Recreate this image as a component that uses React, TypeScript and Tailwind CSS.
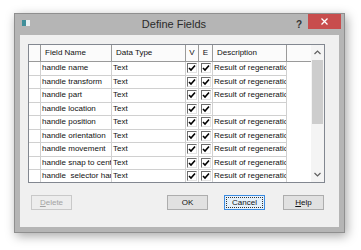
import React from "react";

const rows = [
  { name: "handle name", desc: "Result of regeneration" },
  { name: "handle transform", desc: "Result of regeneration" },
  { name: "handle part", desc: "Result of regeneration" },
  { name: "handle location", desc: "" },
  { name: "handle position", desc: "Result of regeneration" },
  { name: "handle orientation", desc: "Result of regeneration" },
  { name: "handle movement", desc: "Result of regeneration" },
  { name: "handle snap to center", desc: "Result of regeneration" },
  { name: "handle  selector handle", desc: "Result of regeneration" },
];

function Check() {
  return (
    <div className="w-[10px] h-[10px] bg-white border-t border-l border-t-[#6d6d6d] border-l-[#6d6d6d] border-b border-r border-b-[#e3e3e3] border-r-[#e3e3e3] flex items-center justify-center">
      <svg width="8" height="8" viewBox="0 0 8 8">
        <path d="M1 4 L3 6 L7 1.5" stroke="#000" strokeWidth="1.6" fill="none" />
      </svg>
    </div>
  );
}

function Btn({
  children,
  variant,
}: {
  children: React.ReactNode;
  variant?: "disabled" | "focus";
}) {
  const base =
    "w-[41px] h-[15px] flex items-center justify-center text-[8px] leading-none border";
  if (variant === "disabled")
    return <div className={`${base} border-[#c9c9c9] bg-[#ededed] text-[#a3a3a3]`}>{children}</div>;
  if (variant === "focus")
    return (
      <div className={`${base} border-[#3c8be0] bg-[#e5f1fb] text-[#111] p-[1px]`}>
        <div className="w-full h-full flex items-center justify-center border border-dotted border-[#333]">
          {children}
        </div>
      </div>
    );
  return <div className={`${base} border-[#adadad] bg-[#e1e1e1] text-[#111]`}>{children}</div>;
}

export default function App() {
  return (
    <div
      className="w-[361px] h-[250px] bg-white overflow-hidden pt-[13px] pl-[14px]"
      style={{ fontFamily: '"Liberation Sans", Arial, sans-serif' }}
    >
      <div className="w-[331px] h-[220px] bg-[#b5b5b5] border border-[#8f8f8f] flex flex-col shadow-[2px_3px_10px_rgba(0,0,0,0.35)]">
        {/* title bar */}
        <div className="h-[21px] flex items-start relative">
          <div className="mt-[6px] ml-[7px] w-[8px] h-[6px] flex">
            <div className="w-[4px] h-full bg-[#3f8f9a]" />
            <div className="w-[4px] h-full bg-[#e8f0f2]" />
          </div>
          <div className="flex-1 text-center text-[11px] text-[#2a2a2a] pt-[3px] pl-[22px] leading-[14px]">
            Define Fields
          </div>
          <div className="mt-[3px] mr-[6px] text-[10px] font-bold text-[#333]">?</div>
          <div className="w-[33px] h-[15px] bg-[#c84d4d] mr-[3px] flex items-center justify-center">
            <svg width="7" height="7" viewBox="0 0 7 7">
              <path d="M0.5 0.5 L6.5 6.5 M6.5 0.5 L0.5 6.5" stroke="#fff" strokeWidth="1.3" />
            </svg>
          </div>
        </div>

        {/* client area */}
        <div className="flex-1 mx-[5px] mb-[5px] bg-[#f0f0f0] flex flex-col pt-[9px] px-[8px]">
          <div className="w-[297px] h-[139px] border border-[#828790] bg-white flex overflow-hidden text-[8px] text-[#111]">
            <div className="flex-1 flex flex-col overflow-hidden">
              {/* header */}
              <div className="h-[17px] shrink-0 flex bg-[#fbfbfb] border-b border-[#9a9a9a]">
                <div className="w-[12px] border-r border-[#9a9a9a]" />
                <div className="w-[71px] border-r border-[#9a9a9a] pl-[4px] flex items-center">Field Name</div>
                <div className="w-[74px] border-r border-[#9a9a9a] pl-[4px] flex items-center">Data Type</div>
                <div className="w-[13px] border-r border-[#9a9a9a] flex items-center justify-center">V</div>
                <div className="w-[14px] border-r border-[#9a9a9a] flex items-center justify-center">E</div>
                <div className="w-[74px] border-r border-[#9a9a9a] pl-[4px] flex items-center">Description</div>
                <div className="flex-1" />
              </div>
              {rows.map((r, i) => (
                <div key={i} className="h-[13.5px] shrink-0 flex">
                  <div className="w-[12px] border-r border-b border-[#d0d0d0]" />
                  <div className="w-[71px] border-r border-b border-[#d0d0d0] pl-[1px] flex items-center overflow-hidden">
                    <span className="block w-[69px] overflow-hidden whitespace-pre">{r.name}</span>
                  </div>
                  <div className="w-[74px] border-r border-b border-[#d0d0d0] pl-[1px] flex items-center">Text</div>
                  <div className="w-[13px] border-r border-b border-[#d0d0d0] flex items-center justify-center">
                    <Check />
                  </div>
                  <div className="w-[14px] border-r border-b border-[#d0d0d0] flex items-center justify-center">
                    <Check />
                  </div>
                  <div className="w-[74px] border-r border-b border-[#d0d0d0] pl-[1px] flex items-center overflow-hidden">
                    <span className="block w-[72px] overflow-hidden whitespace-nowrap">{r.desc}</span>
                  </div>
                  <div className="flex-1" />
                </div>
              ))}
            </div>
            {/* scrollbar */}
            <div className="w-[13px] bg-[#f4f4f4] flex flex-col">
              <div className="h-[15px] flex items-center justify-center">
                <svg width="7" height="5" viewBox="0 0 7 5">
                  <path d="M0.5 4 L3.5 1 L6.5 4" stroke="#606060" strokeWidth="1.2" fill="none" />
                </svg>
              </div>
              <div className="h-[64px] mx-[1px] bg-[#cdcdcd]" />
              <div className="flex-1" />
              <div className="h-[15px] flex items-center justify-center">
                <svg width="7" height="5" viewBox="0 0 7 5">
                  <path d="M0.5 1 L3.5 4 L6.5 1" stroke="#606060" strokeWidth="1.2" fill="none" />
                </svg>
              </div>
            </div>
          </div>

          {/* buttons */}
          <div className="mt-[12px] flex ml-[3px]">
            <Btn variant="disabled">
              <span className="underline">D</span>elete
            </Btn>
            <div className="ml-[95px]">
              <Btn>OK</Btn>
            </div>
            <div className="ml-[16px]">
              <Btn variant="focus">Cancel</Btn>
            </div>
            <div className="ml-[18px]">
              <Btn>
                <span className="underline">H</span>elp
              </Btn>
            </div>
          </div>
        </div>
      </div>
    </div>
  );
}
